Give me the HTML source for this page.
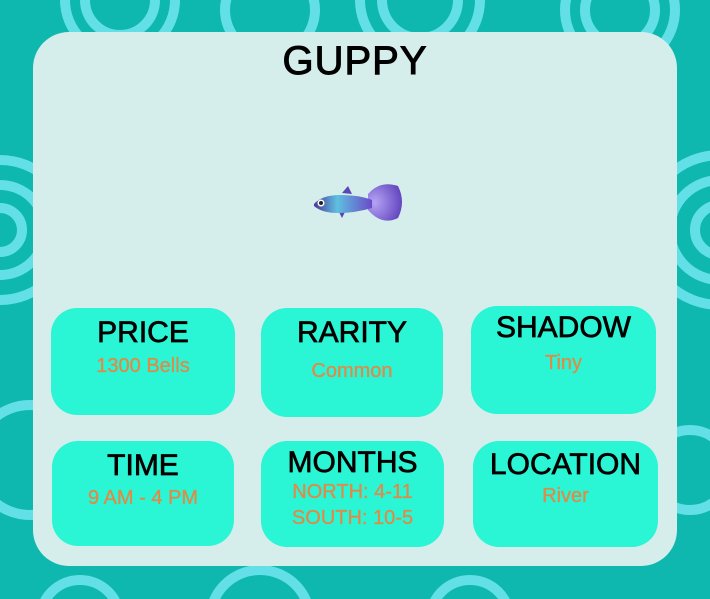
<!DOCTYPE html>
<html style="overflow:hidden;width:710px;height:599px"><head><style>
html,body{margin:0;padding:0}
body{width:710px;height:599px;overflow:hidden;background:#0fb8ae;font-family:"Liberation Sans",sans-serif}
#w{position:relative;width:710px;height:599px;overflow:hidden}
svg.bg{position:absolute;left:0;top:0;display:block;overflow:hidden}
.card{position:absolute;left:33px;top:32px;width:644px;height:534px;background:#d5eeec;border-radius:36px}
h1{position:absolute;left:0;width:710px;top:38px;margin:0;text-align:center;font-size:40px;font-weight:normal;color:#000;-webkit-text-stroke:1px #000;letter-spacing:1px;line-height:46px}
.box{position:absolute;background:#2af5d4;border-radius:26px;text-align:center}
.t{font-size:30px;color:#000;-webkit-text-stroke:0.7px #000;line-height:32px}
.v{font-size:20px;color:#e08a48;line-height:26px;-webkit-text-stroke:0.3px #e08a48}
</style></head><body><div id="w">
<svg class="bg" width="710" height="599" viewBox="0 0 710 599" fill="none" stroke="#63e0e7" stroke-width="10">
<circle cx="120" cy="0" r="55"/><circle cx="120" cy="0" r="35"/>
<circle cx="270" cy="10" r="45"/><circle cx="420" cy="0" r="60"/><circle cx="420" cy="0" r="38"/>
<circle cx="620" cy="10" r="55"/><circle cx="620" cy="10" r="35"/>
<circle cx="0" cy="230" r="70"/><circle cx="0" cy="230" r="45"/><circle cx="0" cy="230" r="22"/>
<circle cx="720" cy="230" r="75"/><circle cx="720" cy="230" r="50"/><circle cx="720" cy="230" r="25"/>
<circle cx="30" cy="460" r="55"/><circle cx="690" cy="470" r="40"/>
<circle cx="260" cy="620" r="50"/><circle cx="470" cy="620" r="40"/><circle cx="80" cy="620" r="40"/>
</svg>
<div class="card"></div>
<h1>GUPPY</h1>
<svg style="position:absolute;left:310px;top:180px" width="96" height="46" viewBox="0 0 96 46">
<defs><linearGradient id="b" x1="0" x2="1"><stop offset="0" stop-color="#4a3a9a"/><stop offset=".4" stop-color="#5fc0e0"/><stop offset="1" stop-color="#6a4ac8"/></linearGradient>
<radialGradient id="tl" cx=".2" cy=".5" r=".9"><stop offset="0" stop-color="#b4a4f4"/><stop offset="1" stop-color="#5a3ab8"/></radialGradient></defs>
<path d="M58 14 Q70 0 88 6 Q96 22 88 38 Q72 46 58 30 Z" fill="url(#tl)"/>
<path d="M32 13 L38 6 L42 14 Z" fill="#5a48b0"/>
<path d="M28 30 L32 38 L36 30 Z" fill="#5a48b0"/>
<path d="M4 24 Q12 15 30 15 Q50 15 62 20 L62 28 Q45 33 28 33 Q12 33 4 26 Z" fill="url(#b)"/>
<circle cx="11" cy="23" r="3.5" fill="#fff"/><circle cx="11" cy="23" r="2" fill="#222"/>
</svg>
<div class="box" style="left:51px;top:308px;width:184px;height:107px"><div class="t" style="margin-top:9px">PRICE</div><div class="v" style="margin-top:4px">1300 Bells</div></div>
<div class="box" style="left:261px;top:308px;width:182px;height:109px"><div class="t" style="margin-top:9px">RARITY</div><div class="v" style="margin-top:9px">Common</div></div>
<div class="box" style="left:471px;top:306px;width:185px;height:108px"><div class="t" style="margin-top:6px">SHADOW</div><div class="v" style="margin-top:6px">Tiny</div></div>
<div class="box" style="left:52px;top:441px;width:182px;height:105px"><div class="t" style="margin-top:9px">TIME</div><div class="v" style="margin-top:3px">9 AM - 4 PM</div></div>
<div class="box" style="left:261px;top:441px;width:183px;height:106px"><div class="t" style="margin-top:6px">MONTHS</div><div class="v" style="margin-top:0px">NORTH: 4-11</div><div class="v">SOUTH: 10-5</div></div>
<div class="box" style="left:473px;top:441px;width:185px;height:106px"><div class="t" style="margin-top:8px">LOCATION</div><div class="v" style="margin-top:2px">River</div></div>
</div></body></html>
